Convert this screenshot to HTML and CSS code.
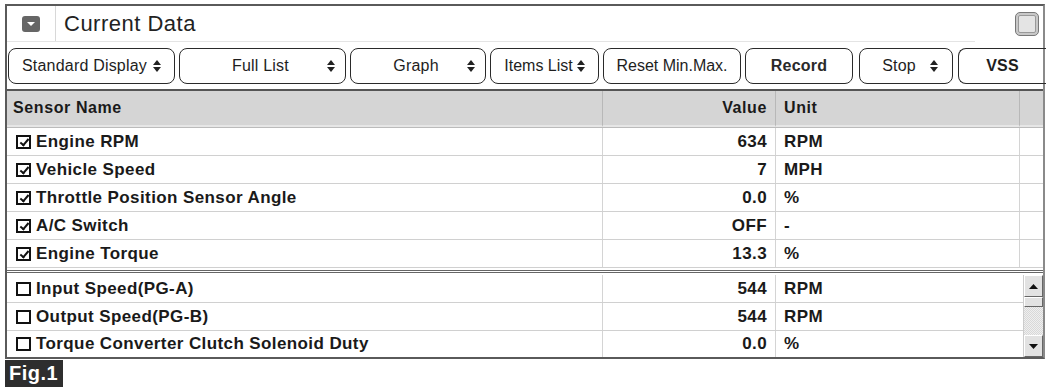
FILE: index.html
```html
<!DOCTYPE html>
<html lang="en">
<head>
    <meta charset="UTF-8">
    <title>Current Data</title>
    <link rel="stylesheet" href="styles.css">
</head>
<body>
    <div class="panel">
        <div class="titlebar">
            <span class="menu-icon">
                <svg width="18" height="16" viewBox="0 0 18 16"><rect x="0" y="0" width="18" height="16" rx="3" fill="#666"/><path d="M5 6 L13 6 L9 10 Z" fill="#fff"/></svg>
            </span>
            <span class="title">Current Data</span>
            <span class="win-btn"><span></span></span>
        </div>

        <div class="toolbar">
            <div class="btn w-std">Standard Display <i class="spin"></i></div>
            <div class="btn w-full spread"><span class="pad"></span>Full List <i class="spin"></i></div>
            <div class="btn w-graph spread"><span class="pad"></span>Graph <i class="spin"></i></div>
            <div class="btn w-items">Items List <i class="spin"></i></div>
            <div class="btn w-reset">Reset Min.Max.</div>
            <div class="btn w-rec">Record</div>
            <div class="btn w-stop">Stop <i class="spin"></i></div>
            <div class="btn w-vss">VSS</div>
        </div>

        <div class="grid">
            <div class="row head">
                <div class="c name">Sensor Name</div>
                <div class="c val">Value</div>
                <div class="c unit">Unit</div>
                <div class="c rest"></div>
            </div>
            <div class="row"><div class="c name"><i class="chk on"></i>Engine RPM</div><div class="c val">634</div><div class="c unit">RPM</div><div class="c rest"></div></div>
            <div class="row"><div class="c name"><i class="chk on"></i>Vehicle Speed</div><div class="c val">7</div><div class="c unit">MPH</div><div class="c rest"></div></div>
            <div class="row"><div class="c name"><i class="chk on"></i>Throttle Position Sensor Angle</div><div class="c val">0.0</div><div class="c unit">%</div><div class="c rest"></div></div>
            <div class="row"><div class="c name"><i class="chk on"></i>A/C Switch</div><div class="c val">OFF</div><div class="c unit">-</div><div class="c rest"></div></div>
            <div class="row"><div class="c name"><i class="chk on"></i>Engine Torque</div><div class="c val">13.3</div><div class="c unit">%</div><div class="c rest"></div></div>
        </div>

        <div class="lower">
            <div class="lower-rows">
                <div class="row"><div class="c name"><i class="chk"></i>Input Speed(PG-A)</div><div class="c val">544</div><div class="c unit">RPM</div></div>
                <div class="row"><div class="c name"><i class="chk"></i>Output Speed(PG-B)</div><div class="c val">544</div><div class="c unit">RPM</div></div>
                <div class="row"><div class="c name"><i class="chk"></i>Torque Converter Clutch Solenoid Duty</div><div class="c val">0.0</div><div class="c unit">%</div></div>
            </div>
            <div class="scrollbar">
                <div class="sb-btn"><svg width="9" height="5" viewBox="0 0 9 5"><path d="M0 5 L4.5 0 L9 5 Z" fill="#111"/></svg></div>
                <div class="sb-thumb"></div>
                <div class="sb-track"></div>
                <div class="sb-btn"><svg width="9" height="5" viewBox="0 0 9 5"><path d="M0 0 L9 0 L4.5 5 Z" fill="#111"/></svg></div>
            </div>
        </div>
    </div>
    <div class="fig">Fig.1</div>
</body>
</html>
```

FILE: styles.css
```css
body {
    margin: 0;
    padding: 4px 5px 0 5px;
    background: #fff;
    font-family: 'Liberation Sans', Arial, sans-serif;
    color: #1a1a1a;
}
.panel {
    width: 1036px;
    border: 2px solid #5a5a5a;
    border-right-color: #8a8a8a;
    background: #fff;
}
.titlebar {
    height: 35px;
    display: flex;
    align-items: center;
    border-bottom: 1px solid #e4e4e4;
    margin-right: 68px;
}
.menu-icon {
    width: 49px;
    display: flex;
    justify-content: center;
    height: 35px;
    align-items: center;
    border-right: 1px solid #d8d8d8;
    box-sizing: border-box;
}
.title {
    font-size: 22px;
    letter-spacing: 0.5px;
    margin-left: 8px;
    color: #222;
    flex: 1;
}
.win-btn {
    width: 22px;
    height: 22px;
    border: 1px solid #777;
    border-radius: 5px;
    background: #c8c8c8;
    display: flex;
    align-items: center;
    justify-content: center;
    margin-right: -64px;
}
.win-btn span {
    width: 16px;
    height: 16px;
    border: 1px solid #999;
    border-radius: 2px;
    background: #e4e4e4;
}

/* toolbar */
.toolbar {
    display: flex;
    padding: 6px 0 5px 1px;
}
.btn {
    height: 36px;
    border: 1.5px solid #2a2a2a;
    border-radius: 8px;
    display: flex;
    align-items: center;
    justify-content: center;
    gap: 6px;
    font-size: 16px;
    letter-spacing: 0.2px;
    color: #1e1e1e;
    box-sizing: border-box;
    flex: none;
}
.btn.spread { justify-content: space-between; padding: 0 10px 0 0; }
.btn.spread .pad { width: 14px; }
.w-std { width: 167px; }
.w-full { width: 167px; margin-left: 4px; }
.w-graph { width: 136px; margin-left: 4px; }
.w-items { width: 109px; margin-left: 4px; gap: 4px; letter-spacing: 0; }
.w-reset { width: 138px; margin-left: 4px; letter-spacing: 0; }
.w-rec { width: 108px; margin-left: 4px; font-weight: 600; color: #2a2a2a; }
.w-stop { width: 94px; margin-left: 6px; gap: 14px; padding-left: 8px; }
.w-vss { width: 88px; margin-left: 5px; border-right: none; border-radius: 8px 0 0 8px; font-weight: bold; }
.spin {
    display: inline-flex;
    flex-direction: column;
    gap: 2px;
}
.spin::before, .spin::after {
    content: "";
    border-left: 4px solid transparent;
    border-right: 4px solid transparent;
}
.spin::before { border-bottom: 5px solid #222; }
.spin::after { border-top: 5px solid #222; }

/* table */
.grid, .lower-rows {
    display: flex;
    flex-direction: column;
}
.grid { border-top: 2px solid #555; }
.row {
    display: grid;
    grid-template-columns: 596px 173px 244px 1fr;
    height: 28px;
    box-sizing: border-box;
    border-bottom: 1px solid #d0d0d0;
    font-weight: bold;
    font-size: 17px;
    letter-spacing: 0.4px;
    color: #1a1a1a;
}
.row.head {
    height: 37px;
    background: #d5d5d5;
    border-bottom: 1px solid #bbb;
    font-size: 16px;
    letter-spacing: 0.6px;
}
.c {
    display: flex;
    align-items: center;
    border-right: 1px solid #d4d4d4;
    padding: 0 6px;
    white-space: nowrap;
    overflow: hidden;
}
.head .c { border-right-color: #b8b8b8; border-bottom: 2px solid #e6e6e6; }
.row:not(.head) .c.name { padding-left: 9px; }
.c.val { justify-content: flex-end; padding-right: 8px; }
.c.unit { padding-left: 8px; }
.c.rest { border-right: none; }
.chk {
    width: 15px;
    height: 14px;
    box-sizing: border-box;
    border: 2px solid #111;
    margin-right: 5px;
    flex: none;
    position: relative;
}
.chk.on::after {
    content: "";
    position: absolute;
    left: 4px;
    top: 0px;
    width: 3px;
    height: 7px;
    border: solid #111;
    border-width: 0 2px 2px 0;
    transform: rotate(40deg);
}

.lower {
    display: flex;
    border-top: 3px double #666;
    margin-top: 2px;
    padding-top: 2px;
}
.lower-rows { flex: 1; }
.lower-rows .row { grid-template-columns: 596px 173px 1fr; }
.lower-rows .row:last-child { border-bottom: none; height: 26px; }
.lower-rows .c.unit { border-right: none; }
.scrollbar {
    width: 19px;
    display: flex;
    flex-direction: column;
    border-left: 1px solid #ccc;
    background: #e8e8e8;
}
.sb-btn {
    height: 22px;
    background: #e2e2e2;
    border: 1px solid #fff;
    border-right-color: #666;
    border-bottom-color: #666;
    display: flex;
    align-items: center;
    justify-content: center;
    box-sizing: border-box;
}
.sb-thumb {
    height: 10px;
    background: #e2e2e2;
    border: 1px solid #fff;
    border-right-color: #666;
    border-bottom-color: #666;
    box-sizing: border-box;
}
.sb-track {
    flex: 1;
    background: repeating-conic-gradient(#d8d8d8 0 25%, #efefef 0 50%) 0 0 / 2px 2px;
}

.fig {
    display: inline-block;
    margin-top: 1px;
    background: #2e2e2e;
    color: #fff;
    font-weight: bold;
    font-size: 20px;
    line-height: 27px;
    padding: 0 5px 0 4px;
    letter-spacing: 0.5px;
}
```
